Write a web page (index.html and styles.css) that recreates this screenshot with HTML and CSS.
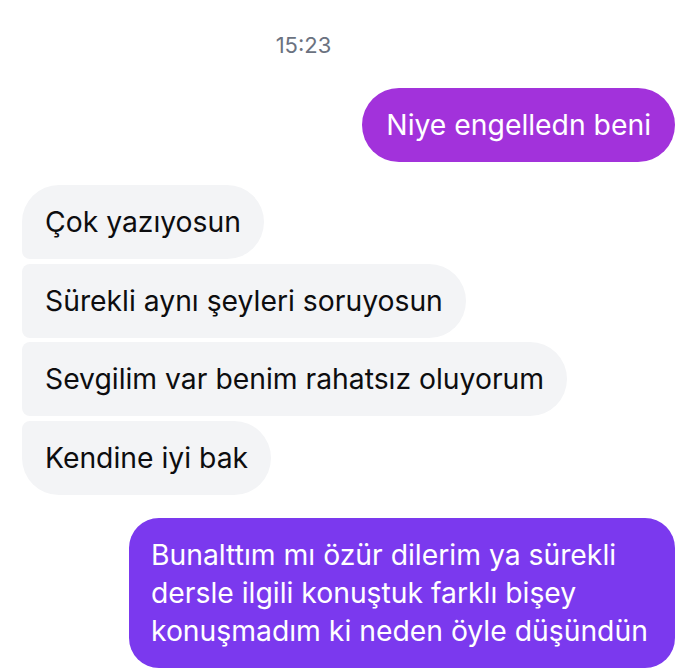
FILE: index.html
```html
<!DOCTYPE html>
<html lang="tr">
<head>
    <meta charset="UTF-8">
    <meta name="viewport" content="width=device-width, initial-scale=1.0">
    <title>Sohbet</title>
    <link rel="stylesheet" href="styles.css">
</head>
<body>
    <div class="chat">
        <div class="time">15:23</div>

        <div class="row sent top">
            <div class="bubble out pink">Niye engelledn beni</div>
        </div>

        <div class="group">
            <div class="row"><div class="bubble in first">Çok yazıyosun</div></div>
            <div class="row"><div class="bubble in mid">Sürekli aynı şeyleri soruyosun</div></div>
            <div class="row"><div class="bubble in mid">Sevgilim var benim rahatsız oluyorum</div></div>
            <div class="row"><div class="bubble in last">Kendine iyi bak</div></div>
        </div>

        <div class="row sent">
            <div class="bubble out violet">Bunalttım mı özür dilerim ya sürekli dersle ilgili konuştuk farklı bişey konuşmadım ki neden öyle düşündün</div>
        </div>
    </div>
</body>
</html>
```

FILE: styles.css
```css
body {
    margin: 0;
    background: #fff;
    font-family: 'Inter', 'Noto Sans', sans-serif;
    color: #111;
}

.chat {
    display: flex;
    flex-direction: column;
    padding: 33px 15px 0 22px;
}

.time {
    text-align: center;
    font-size: 22px;
    line-height: 24px;
    color: #6b7280;
    margin-right: 90px;
}

.row {
    display: flex;
}

.row.sent {
    justify-content: flex-end;
}

.row.top {
    margin-top: 31px;
}

.group {
    display: flex;
    flex-direction: column;
    gap: 4.7px;
    margin: 23px 0 23px;
}

.bubble {
    font-size: 28.3px;
    line-height: 38px;
    padding: 18px 23px;
    border-radius: 37px;
}

.in {
    background: #f3f4f6;
    color: #0d0d0f;
}

.in.first { border-bottom-left-radius: 8px; }
.in.mid { border-radius: 8px 37px 37px 8px; }
.in.last { border-top-left-radius: 8px; }

.out {
    color: #fff;
}

.pink {
    background: #a232db;
    padding-left: 24px;
    padding-right: 24px;
}

.violet {
    background: #7b39ee;
    max-width: 502px;
    border-radius: 30px;
    padding: 18px 22px 18px 22px;
}
```
